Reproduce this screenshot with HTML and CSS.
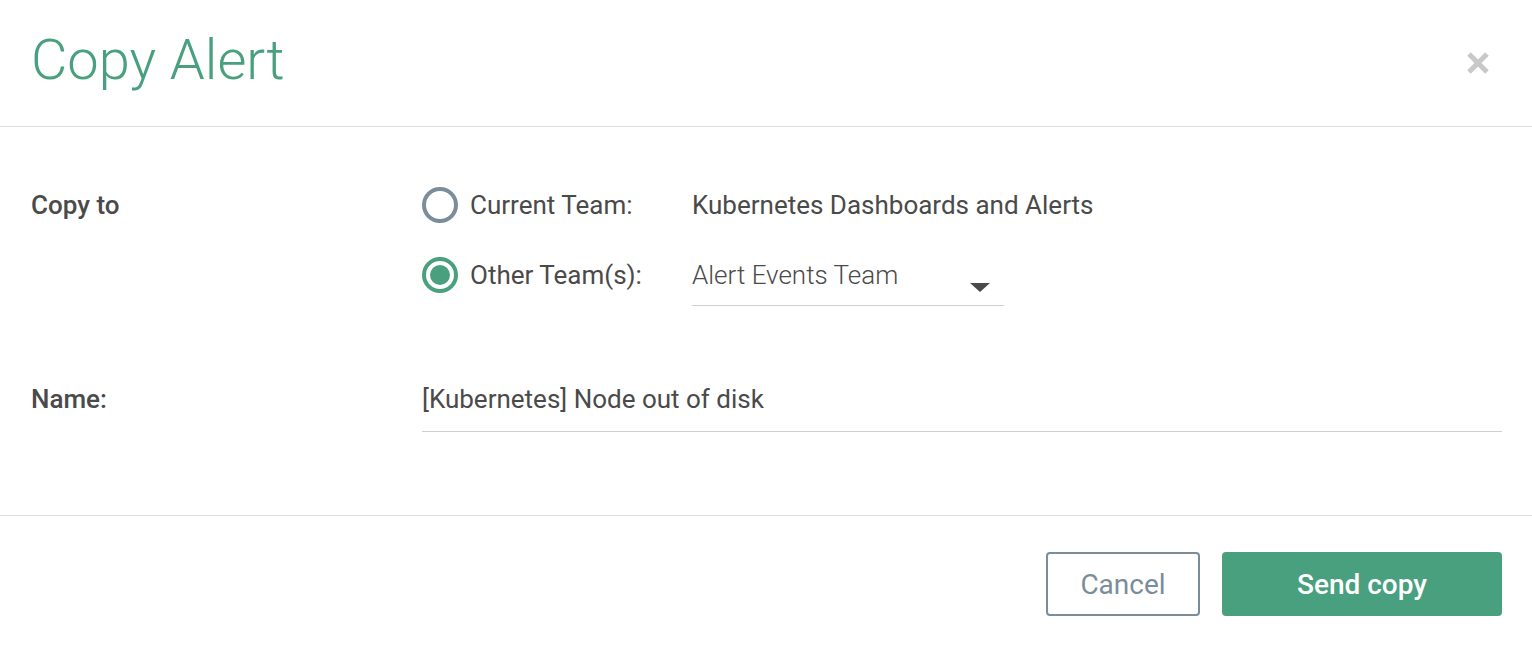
FILE: index.html
```html
<!DOCTYPE html>
<html>
<head>
<meta charset="utf-8">
<link rel="stylesheet" href="styles.css">
</head>
<body>
<div class="modal">
  <div class="header">
    <h1 class="title">Copy Alert</h1>
    <button class="close" aria-label="Close">
      <svg width="22" height="22" viewBox="0 0 22 22"><path d="M2 2 L20 20 M20 2 L2 20" stroke="#c8c8c8" stroke-width="5" stroke-linecap="butt"/></svg>
    </button>
  </div>
  <div class="body">
    <div class="row">
      <div class="label">Copy to</div>
      <div class="options">
        <div class="option">
          <span class="radio"></span>
          <span class="opt-label">Current Team:</span>
          <span class="opt-value">Kubernetes Dashboards and Alerts</span>
        </div>
        <div class="option">
          <span class="radio checked"></span>
          <span class="opt-label">Other Team(s):</span>
          <div class="select">
            <span class="select-text">Alert Events Team</span>
            <span class="caret"></span>
          </div>
        </div>
      </div>
    </div>
    <div class="row name-row">
      <div class="label">Name:</div>
      <div class="input">[Kubernetes] Node out of disk</div>
    </div>
  </div>
  <div class="footer">
    <button class="btn btn-cancel">Cancel</button>
    <button class="btn btn-primary">Send copy</button>
  </div>
</div>
</body>
</html>
```
FILE: styles.css
```css
* { box-sizing: border-box; }
html, body { margin: 0; padding: 0; background: #fff; }
body { font-family: Roboto, "Liberation Sans", sans-serif; color: #4a4a4a; }

.modal { width: 1532px; height: 652px; }

.header {
  height: 127px;
  border-bottom: 1px solid #dedede;
  display: flex;
  align-items: center;
  justify-content: space-between;
  padding: 0 43px 0 31px;
}
.title {
  margin: 0;
  font-size: 56px;
  font-weight: 300;
  color: #48a07f;
  line-height: 1;
  padding-bottom: 6px;
}
.close {
  border: 0;
  background: none;
  padding: 0;
  width: 22px;
  height: 22px;
  display: flex;
}

.body { padding: 54px 30px 83px 31px; }
.row { display: flex; align-items: flex-start; }
.label {
  width: 391px;
  flex: none;
  font-size: 26px;
  font-weight: 500;
  line-height: 48px;
  color: #4a4a4a;
}
.options { display: flex; flex-direction: column; gap: 22px; }
.option { display: flex; align-items: flex-start; }
.radio {
  width: 36px;
  height: 36px;
  margin-top: 6px;
  border: 4px solid #7b8d9a;
  border-radius: 50%;
  flex: none;
  margin-right: 12px;
  display: flex;
  align-items: center;
  justify-content: center;
}
.radio.checked { border-color: #48a07f; }
.radio.checked::after {
  content: "";
  width: 20px;
  height: 20px;
  border-radius: 50%;
  background: #48a07f;
}
.opt-label {
  width: 222px;
  font-size: 26px;
  line-height: 48px;
}
.opt-value { font-size: 26px; line-height: 48px; }
.select {
  width: 312px;
  height: 55px;
  border-bottom: 1px solid #cfcfcf;
  display: flex;
  justify-content: space-between;
  align-items: flex-start;
  padding-right: 14px;
}
.select-text { font-size: 26px; font-weight: 300; line-height: 48px; }
.caret {
  margin-top: 32px;
  width: 0;
  height: 0;
  border-left: 10px solid transparent;
  border-right: 10px solid transparent;
  border-top: 9px solid #4a4a4a;
}

.name-row { margin-top: 69px; }
.input {
  flex: 1;
  font-size: 26px;
  line-height: 48px;
  padding-bottom: 8px;
  border-bottom: 1px solid #cfcfcf;
}

.footer {
  border-top: 1px solid #dedede;
  display: flex;
  justify-content: flex-end;
  gap: 22px;
  padding: 36px 30px 0 0;
}
.btn {
  height: 64px;
  font-family: Roboto, "Liberation Sans", sans-serif;
  font-size: 28px;
  border-radius: 4px;
  cursor: pointer;
}
.btn-cancel {
  width: 154px;
  background: #fff;
  border: 2px solid #7b8d9a;
  color: #7b8d9a;
  font-weight: 400;
}
.btn-primary {
  width: 280px;
  background: #48a07f;
  border: 0;
  color: #fff;
  font-weight: 500;
}
```
